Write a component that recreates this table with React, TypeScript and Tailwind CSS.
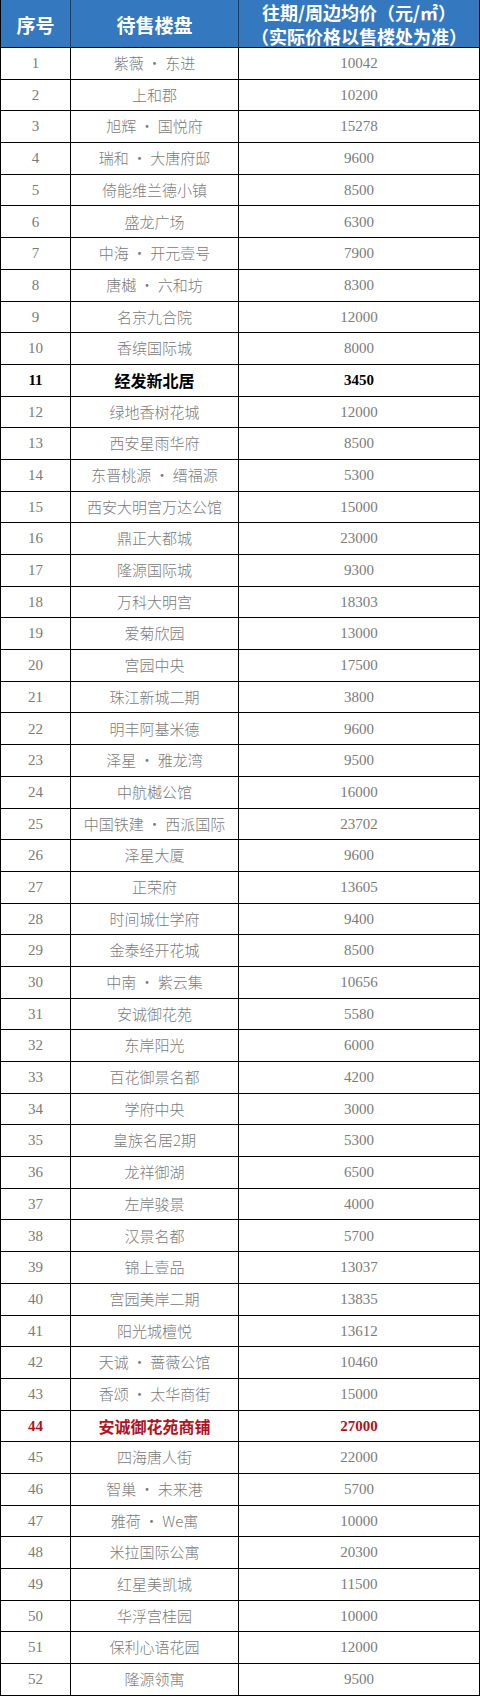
const rows: [string, string][] = [
  ["紫薇 · 东进", "10042"],
  ["上和郡", "10200"],
  ["旭辉 · 国悦府", "15278"],
  ["瑞和 · 大唐府邸", "9600"],
  ["倚能维兰德小镇", "8500"],
  ["盛龙广场", "6300"],
  ["中海 · 开元壹号", "7900"],
  ["唐樾 · 六和坊", "8300"],
  ["名京九合院", "12000"],
  ["香缤国际城", "8000"],
  ["经发新北居", "3450"],
  ["绿地香树花城", "12000"],
  ["西安星雨华府", "8500"],
  ["东晋桃源 · 缙福源", "5300"],
  ["西安大明宫万达公馆", "15000"],
  ["鼎正大都城", "23000"],
  ["隆源国际城", "9300"],
  ["万科大明宫", "18303"],
  ["爱菊欣园", "13000"],
  ["宫园中央", "17500"],
  ["珠江新城二期", "3800"],
  ["明丰阿基米德", "9600"],
  ["泽星 · 雅龙湾", "9500"],
  ["中航樾公馆", "16000"],
  ["中国铁建 · 西派国际", "23702"],
  ["泽星大厦", "9600"],
  ["正荣府", "13605"],
  ["时间城仕学府", "9400"],
  ["金泰经开花城", "8500"],
  ["中南 · 紫云集", "10656"],
  ["安诚御花苑", "5580"],
  ["东岸阳光", "6000"],
  ["百花御景名都", "4200"],
  ["学府中央", "3000"],
  ["皇族名居2期", "5300"],
  ["龙祥御湖", "6500"],
  ["左岸骏景", "4000"],
  ["汉景名都", "5700"],
  ["锦上壹品", "13037"],
  ["宫园美岸二期", "13835"],
  ["阳光城檀悦", "13612"],
  ["天诚 · 蔷薇公馆", "10460"],
  ["香颂 · 太华商街", "15000"],
  ["安诚御花苑商铺", "27000"],
  ["四海唐人街", "22000"],
  ["智巢 · 未来港", "5700"],
  ["雅荷 · We寓", "10000"],
  ["米拉国际公寓", "20300"],
  ["红星美凯城", "11500"],
  ["华浮宫桂园", "10000"],
  ["保利心语花园", "12000"],
  ["隆源领寓", "9500"],
];

const font = { fontFamily: '"Liberation Serif", "Noto Sans CJK SC", serif' };
const cjk = { fontFamily: '"Noto Sans CJK SC", sans-serif' };

export default function App() {
  return (
    <div className="w-[480px] h-[1696px] flex flex-col bg-white border-x border-black" style={font}>
      {/* 表头 */}
      <div className="h-[48px] shrink-0 grid grid-cols-[70px_168px_1fr] bg-[#3479bf] text-white font-bold border-b border-black" style={cjk}>
        <div className="flex items-center justify-center border-r border-[#1d3e63] text-[19px]">序号</div>
        <div className="flex items-center justify-center border-r border-[#1d3e63] text-[19px]">待售楼盘</div>
        <div className="flex flex-col items-center justify-center text-[18px] leading-[24px] pb-[2px]">
          <span>往期/周边均价（元/㎡）</span>
          <span>（实际价格以售楼处为准）</span>
        </div>
      </div>

      {/* 数据行 */}
      {rows.map(([name, price], i) => {
        const no = i + 1;
        const bold = no === 11 || no === 44;
        const color = no === 44 ? "text-[#b3121b]" : no === 11 ? "text-black" : "text-[#7b7b7b]";
        return (
          <div
            key={no}
            className={`flex-1 grid grid-cols-[70px_168px_1fr] border-black ${no > 1 ? "border-t" : ""} ${no === rows.length ? "border-b" : ""} text-[15px] ${color} ${bold ? "font-bold" : ""}`}
          >
            <div className="flex items-center justify-center border-r border-black">{no}</div>
            <div className="flex items-center justify-center border-r border-black whitespace-nowrap" style={cjk}>
              <span className={bold ? "text-[16px]" : "font-light"}>{name}</span>
            </div>
            <div className="flex items-center justify-center">{price}</div>
          </div>
        );
      })}
    </div>
  );
}
